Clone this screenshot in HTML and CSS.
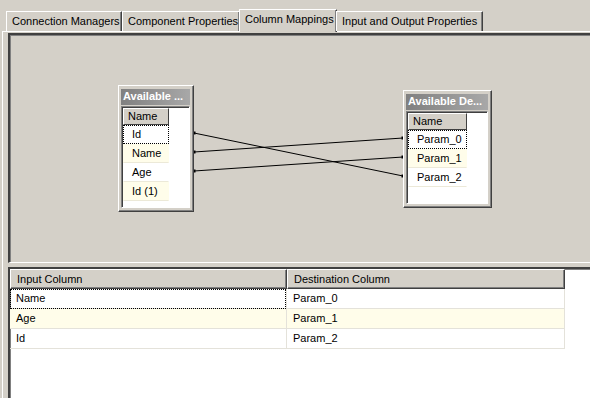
FILE: index.html
```html
<!DOCTYPE html>
<html lang="en">
<head>
  <meta charset="UTF-8">
  <title>Column Mappings</title>
  <link rel="stylesheet" href="styles.css">
</head>
<body>
  <div class="tabs">
    <div class="tab t1">Connection Managers</div>
    <div class="tab t2">Component Properties</div>
    <div class="tab t3 active">Column Mappings</div>
    <div class="tab t4">Input and Output Properties</div>
  </div>

  <div class="panel">
    <div class="canvas">
      <svg class="links" width="600" height="230">
        <g stroke="#000" stroke-width="1" fill="#000">
          <line x1="184" y1="98" x2="393" y2="141"/>
          <line x1="184" y1="117" x2="393" y2="103"/>
          <line x1="184" y1="136" x2="393" y2="122"/>
          <rect x="183" y="97" width="2" height="2"/>
          <rect x="183" y="116" width="2" height="2"/>
          <rect x="183" y="135" width="2" height="2"/>
          <rect x="392" y="140" width="2" height="2"/>
          <rect x="392" y="102" width="2" height="2"/>
          <rect x="392" y="121" width="2" height="2"/>
        </g>
      </svg>

      <div class="box box-src">
        <div class="box-title">Available ...</div>
        <div class="box-list">
          <div class="list-col">
            <div class="list-head">Name</div>
            <div class="item focus">Id</div>
            <div class="item alt">Name</div>
            <div class="item">Age</div>
            <div class="item alt">Id (1)</div>
          </div>
        </div>
      </div>

      <div class="box box-dst">
        <div class="box-title">Available De...</div>
        <div class="box-list">
          <div class="list-col">
            <div class="list-head">Name</div>
            <div class="item focus">Param_0</div>
            <div class="item alt">Param_1</div>
            <div class="item">Param_2</div>
          </div>
        </div>
      </div>
    </div>

    <div class="splitter"></div>

    <div class="grid">
      <div class="grid-head">
        <div class="hcell c1">Input Column</div>
        <div class="hcell c2">Destination Column</div>
      </div>
      <div class="grid-row">
        <div class="cell c1"><span class="focus-cell">Name</span></div>
        <div class="cell c2">Param_0</div>
      </div>
      <div class="grid-row alt">
        <div class="cell c1">Age</div>
        <div class="cell c2">Param_1</div>
      </div>
      <div class="grid-row">
        <div class="cell c1">Id</div>
        <div class="cell c2">Param_2</div>
      </div>
    </div>
  </div>
</body>
</html>
```

FILE: styles.css
```css
body {
  margin: 0;
  background: #d4d0c8;
  font-family: "Liberation Sans", Arial, sans-serif;
  font-size: 11px;
  color: #000;
  width: 590px;
  height: 398px;
  overflow: hidden;
}

/* tab strip */
.tabs {
  display: flex;
  align-items: flex-end;
  height: 31px;
  padding-left: 6px;
  position: relative;
  z-index: 2;
}
.tab {
  box-sizing: border-box;
  height: 20px;
  line-height: 18px;
  padding: 0 5px;
  border-top: 1px solid #fff;
  border-left: 1px solid #fff;
  border-right: 1px solid #404040;
  box-shadow: inset -1px 0 0 #808080;
  white-space: nowrap;
}
.t1 { width: 116px; }
.t2 { width: 118px; }
.t3 { width: 98px; margin-left: -1px; }
.t4 { width: 147px; margin-left: -1px; }
.tab.active {
  height: 23px;
  line-height: 17px;
  margin-bottom: -1px;
  padding-top: 1px;
  background: #d4d0c8;
}

/* panel */
.panel {
  border-top: 1px solid #fff;
  border-left: 1px solid #fff;
  margin-left: 2px;
  padding: 1px 0 0 5px;
  height: 366px;
}
.canvas {
  position: relative;
  height: 227px;
  border-top: 2px solid #404040;
  border-left: 2px solid #404040;
  border-bottom: 1px solid #fff;
  box-shadow: inset 1px 1px 0 #808080;
  overflow: hidden;
}
.links {
  position: absolute;
  left: 0;
  top: 0;
}

/* diagram boxes */
.box {
  position: absolute;
  box-sizing: border-box;
  background: #d4d0c8;
  border-top: 1px solid #fff;
  border-left: 1px solid #fff;
  border-right: 1px solid #404040;
  border-bottom: 1px solid #404040;
  box-shadow: inset -1px -1px 0 #808080;
  padding: 3px 3px 3px 2px;
  display: flex;
  flex-direction: column;
}
.box-src { left: 108px; top: 50px; width: 76px; height: 127px; }
.box-dst { left: 393px; top: 55px; width: 89px; height: 118px; }
.box-title {
  height: 16px;
  line-height: 15px;
  background: linear-gradient(to right, #808080, #a8a8a8);
  color: #fff;
  font-weight: bold;
  padding-left: 2px;
  white-space: nowrap;
  overflow: hidden;
  margin-bottom: 1px;
}
.box-list {
  flex: 1;
  background: #fff;
  border-top: 1px solid #808080;
  border-left: 1px solid #808080;
  border-right: 1px solid #fff;
  border-bottom: 1px solid #fff;
  box-shadow: inset 1px 1px 0 #404040;
  padding: 1px 0 0 1px;
}
.list-col { width: 46px; }
.box-dst .list-col { width: 59px; }
.list-head {
  box-sizing: border-box;
  height: 17px;
  line-height: 15px;
  padding-left: 4px;
  background: #d4d0c8;
  border-top: 1px solid #fff;
  border-left: 1px solid #fff;
  border-right: 1px solid #404040;
  border-bottom: 1px solid #404040;
}
.item {
  box-sizing: border-box;
  height: 19px;
  line-height: 17px;
  padding-left: 8px;
  border: 1px solid transparent;
  border-bottom-color: #ece9d8;
}
.item.alt { background: #fffdea; }
.item.focus { border: 1px dotted #000; }

/* splitter */
.splitter { height: 4px; }

/* grid */
.grid {
  height: 132px;
  background: #fff;
  border-top: 2px solid #404040;
  border-left: 2px solid #404040;
  box-shadow: inset 1px 1px 0 #808080;
  padding-top: 0;
}
.grid-head, .grid-row { display: flex; }
.c1 { width: 277px; }
.c2 { width: 278px; }
.hcell {
  box-sizing: border-box;
  height: 20px;
  line-height: 18px;
  padding-left: 6px;
  background: #d4d0c8;
  border-top: 1px solid #fff;
  border-left: 1px solid #fff;
  border-right: 1px solid #404040;
  border-bottom: 1px solid #404040;
  box-shadow: inset -1px -1px 0 #808080;
}
.grid-row {
  height: 20px;
}
.grid-row.alt .cell { background: #fffdea; }
.cell {
  box-sizing: border-box;
  height: 20px;
  line-height: 19px;
  padding-left: 6px;
  border-bottom: 1px solid #e4e2da;
  border-right: 1px solid #e4e2da;
  position: relative;
}
.focus-cell::before {
  content: "";
  position: absolute;
  left: 0;
  top: 0;
  right: 0;
  bottom: -1px;
  border: 1px dotted #000;
}
```
